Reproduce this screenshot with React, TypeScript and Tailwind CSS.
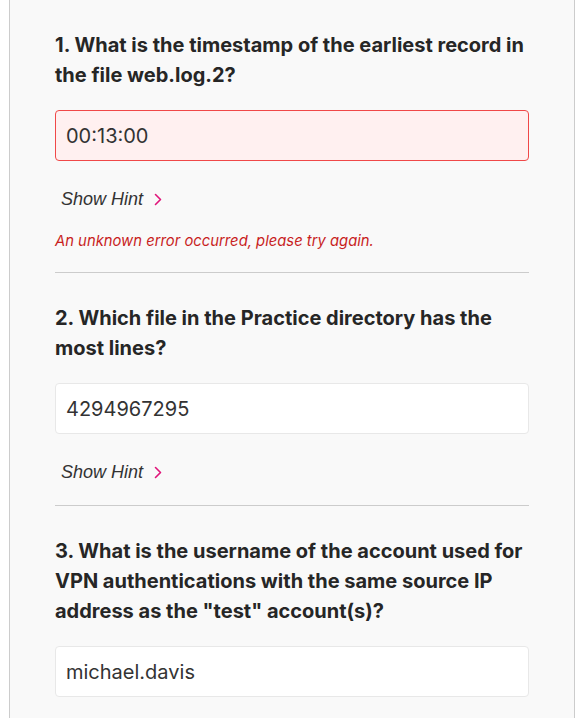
import React from 'react';

// Questions as shown in the challenge panel
type Question = {
  id: number;
  text: string;
  answer: string;
  error?: string;
  hint?: boolean;
};

const questions: Question[] = [
  {
    id: 1,
    text: 'What is the timestamp of the earliest record in the file web.log.2?',
    answer: '00:13:00',
    error: 'An unknown error occurred, please try again.',
    hint: true,
  },
  {
    id: 2,
    text: 'Which file in the Practice directory has the most lines?',
    answer: '4294967295',
    hint: true,
  },
  {
    id: 3,
    text: 'What is the username of the account used for VPN authentications with the same source IP address as the "test" account(s)?',
    answer: 'michael.davis',
  },
];

const Chevron = () => (
  <svg width="8" height="13" viewBox="0 0 8 13" fill="none" className="ml-[11px]">
    <path d="M1.5 1.5 L6.5 6.5 L1.5 11.5" stroke="#e0157a" strokeWidth="1.6" strokeLinecap="round" strokeLinejoin="round" />
  </svg>
);

const QuestionBlock: React.FC<{ q: Question; last: boolean }> = ({ q, last }) => {
  return (
    <div className={last ? 'pt-[30px]' : 'pt-[30px] border-b border-[#cccccc] pb-[21px]'}>
      <h2 className="text-[20px] leading-[30px] font-bold text-[#262626]">
        {q.id}. {q.text}
      </h2>
      <div
        className={`mt-5 h-[51px] flex items-center pl-[10px] rounded-[4px] border text-[20px] text-[#333333] ${
          q.error ? 'border-[#f04848] bg-[#fff0f0]' : 'border-[#e8e8e8] bg-white'
        }`}
      >
        {q.answer}
      </div>
      {q.hint && (
        <div className="mt-[26px] h-6 flex items-center pl-[6px]">
          <span className="italic text-[18px] text-[#333333] font-['Liberation_Sans',sans-serif]">Show Hint</span>
          <Chevron />
        </div>
      )}
      {q.error && (
        <div className="mt-5 h-5 leading-5 italic text-[14.8px] text-[#c81e1e]">{q.error}</div>
      )}
    </div>
  );
};

export default function App() {
  return (
    <div className="min-h-screen bg-white pl-[9px] pr-[1px] font-['Inter',sans-serif]">
      <div className="min-h-[718px] border-x border-[#cccccc] bg-[#f9f9f9] px-[45px] pb-10">
        {questions.map((q, i) => (
          <QuestionBlock key={q.id} q={q} last={i === questions.length - 1} />
        ))}
      </div>
    </div>
  );
}
